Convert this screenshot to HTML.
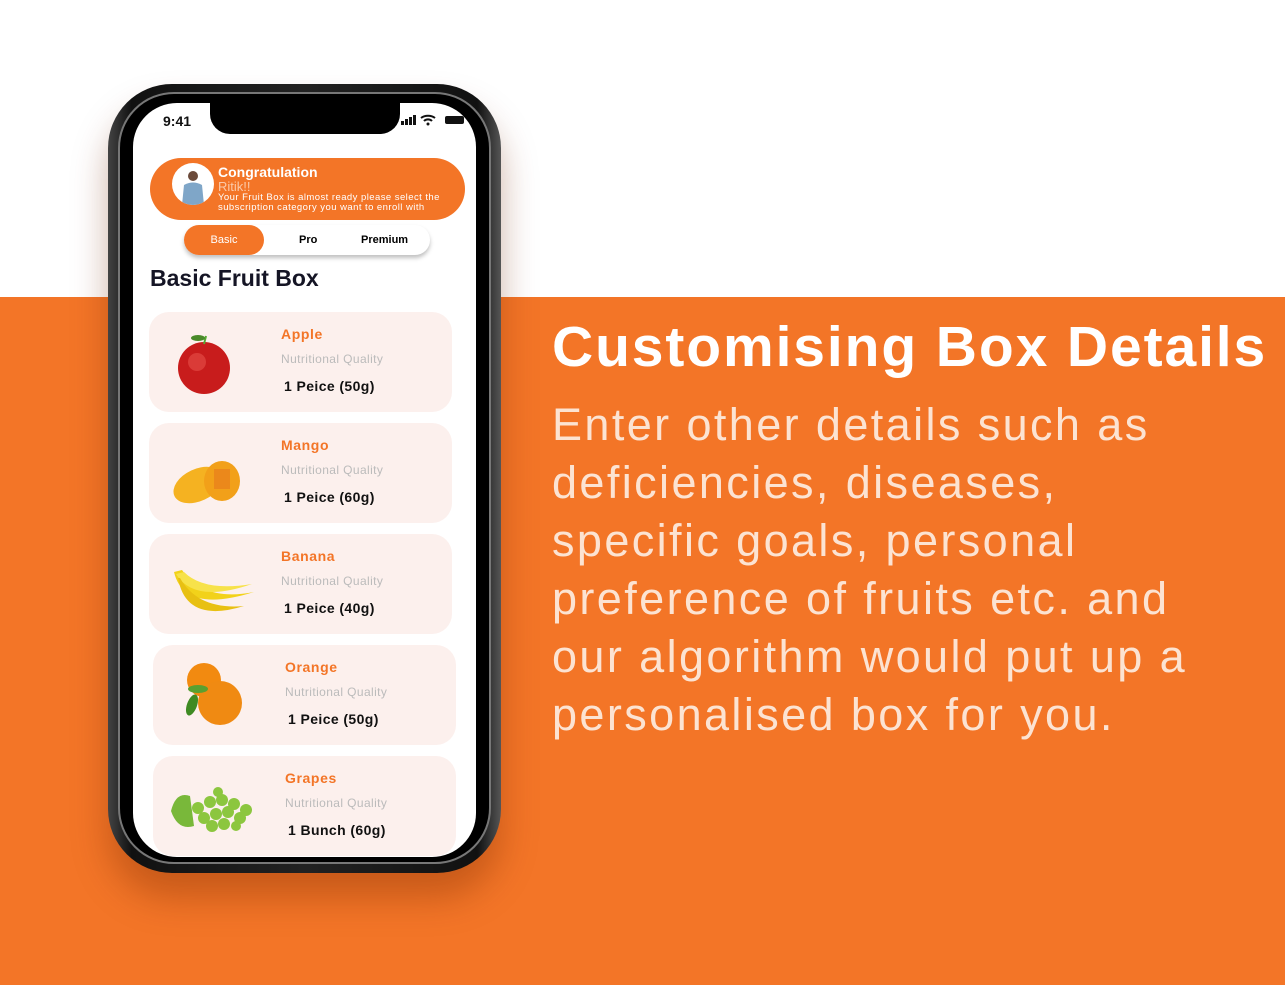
<!DOCTYPE html>
<html><head><meta charset="utf-8"><style>
*{margin:0;padding:0;box-sizing:border-box}
body{width:1285px;height:985px;position:relative;overflow:hidden;background:#fff;font-family:"Liberation Sans",sans-serif}
.band{position:absolute;left:0;top:297px;width:1285px;height:688px;background:#F37527}
.h1{position:absolute;left:552px;top:314px;color:#fff;font-size:57px;font-weight:bold;white-space:nowrap;letter-spacing:1.9px}
.p{position:absolute;left:552px;top:396px;color:#FCE3D2;font-size:45px;line-height:58px;width:700px;letter-spacing:2.4px}
.frame{position:absolute;left:108px;top:84px;width:393px;height:789px;border-radius:64px;background:linear-gradient(90deg,#444,#111 6%,#222 50%,#111 94%,#555);box-shadow:0 25px 35px rgba(120,40,0,.35)}
.frame2{position:absolute;left:118px;top:92px;width:373px;height:772px;border-radius:56px;background:#000;border:2px solid #777}
.screen{position:absolute;left:133px;top:103px;width:343px;height:754px;border-radius:44px;background:#fff;overflow:hidden}
.notch{position:absolute;left:77px;top:0;width:190px;height:31px;background:#000;border-radius:0 0 20px 20px}
.time{position:absolute;left:30px;top:10px;font-size:14px;font-weight:bold;color:#111}
.banner{position:absolute;left:17px;top:55px;width:315px;height:62px;border-radius:31px;background:#F37527;color:#fff}
.av{position:absolute;left:22px;top:5px;width:42px;height:42px;border-radius:50%;background:#fff;overflow:hidden}
.tabs{position:absolute;left:51px;top:122px;width:246px;height:30px;border-radius:15px;background:#fff;box-shadow:0 3px 4px rgba(0,0,0,.25);font-size:11px;font-weight:bold}
.card{position:absolute;width:303px;height:100px;border-radius:20px;background:#FCF0ED}
.card .n{position:absolute;left:132px;top:14px;color:#F37527;font-size:14px;font-weight:bold;letter-spacing:.6px}
.card .q{position:absolute;left:132px;top:40px;color:#bbb;font-size:12px;letter-spacing:.4px}
.card .w{position:absolute;left:135px;top:66px;color:#111;font-size:14px;font-weight:bold;letter-spacing:.4px}
.card svg{position:absolute;left:15px;top:10px}
</style></head><body>
<div class="band"></div>
<div class="h1">Customising Box Details</div>
<div class="p">Enter other details such as<br>deficiencies, diseases,<br>specific goals, personal<br>preference of fruits etc. and<br>our algorithm would put up a<br>personalised box for you.</div>
<div class="frame"></div><div class="frame2"></div>
<div class="screen">
 <div class="notch"></div>
 <div class="time">9:41</div>
 <svg style="position:absolute;left:268px;top:11px" width="64" height="12"><rect x="0" y="7" width="3" height="4" fill="#111"/><rect x="4" y="5" width="3" height="6" fill="#111"/><rect x="8" y="3" width="3" height="8" fill="#111"/><rect x="12" y="1" width="3" height="10" fill="#111"/><path d="M20 4a10 8 0 0 1 14 0M23 7a5 4 0 0 1 8 0" stroke="#111" stroke-width="2" fill="none"/><circle cx="27" cy="10" r="1.5" fill="#111"/><rect x="44" y="2" width="19" height="8" rx="2" fill="#111"/></svg>
 <div class="banner">
  <div class="av"><svg width="42" height="42"><circle cx="21" cy="13" r="5" fill="#6b4a3a"/><path d="M10 42 L12 22 Q21 17 30 22 L32 42Z" fill="#7fa6c8"/></svg></div>
  <div style="position:absolute;left:68px;top:6px;font-size:14px;font-weight:bold">Congratulation</div>
  <div style="position:absolute;left:68px;top:21px;font-size:13px;color:#FBC9A8">Ritik!!</div>
  <div style="position:absolute;left:68px;top:35px;font-size:9.5px;line-height:10px;width:250px;letter-spacing:.45px">Your Fruit Box is almost ready please select the subscription category you want to enroll with</div>
 </div>
 <div class="tabs">
  <div style="position:absolute;left:0;top:0;width:80px;height:30px;border-radius:15px;background:#F37527;color:#fff;text-align:center;line-height:30px;font-weight:normal">Basic</div>
  <div style="position:absolute;left:115px;top:9px">Pro</div>
  <div style="position:absolute;left:177px;top:9px">Premium</div>
 </div>
 <div style="position:absolute;left:17px;top:162px;font-size:23px;font-weight:bold;color:#151525">Basic Fruit Box</div>

 <div class="card" style="left:16px;top:209px"><svg width="90" height="80"><circle cx="40" cy="46" r="26" fill="#c81c1c"/><circle cx="33" cy="40" r="9" fill="#e6504a" opacity=".6"/><path d="M40 22 L42 14" stroke="#5a3" stroke-width="2"/><ellipse cx="34" cy="16" rx="7" ry="3" fill="#4a8a2a"/></svg><div class="n">Apple</div><div class="q">Nutritional Quality</div><div class="w">1 Peice (50g)</div></div>
 <div class="card" style="left:16px;top:320px"><svg width="90" height="80"><ellipse cx="34" cy="52" rx="26" ry="16" fill="#f5b221" transform="rotate(-25 34 52)"/><ellipse cx="58" cy="48" rx="18" ry="20" fill="#f2a019"/><rect x="50" y="36" width="16" height="20" fill="#e6781c" opacity=".6"/></svg><div class="n">Mango</div><div class="q">Nutritional Quality</div><div class="w">1 Peice (60g)</div></div>
 <div class="card" style="left:16px;top:431px"><svg width="100" height="80"><path d="M10 28 Q20 70 90 48 Q40 58 18 26Z" fill="#f2d21a"/><path d="M12 30 Q30 60 88 40 Q40 48 20 28Z" fill="#f7e24a"/><path d="M14 34 Q22 80 80 62 Q34 66 16 34Z" fill="#e8c012"/></svg><div class="n">Banana</div><div class="q">Nutritional Quality</div><div class="w">1 Peice (40g)</div></div>
 <div class="card" style="left:20px;top:542px"><svg width="90" height="80"><circle cx="36" cy="25" r="17" fill="#f28a10"/><circle cx="52" cy="48" r="22" fill="#f08a12"/><ellipse cx="24" cy="50" rx="5" ry="11" fill="#3f8a22" transform="rotate(20 24 50)"/><ellipse cx="30" cy="34" rx="10" ry="4" fill="#5aa030"/></svg><div class="n">Orange</div><div class="q">Nutritional Quality</div><div class="w">1 Peice (50g)</div></div>
 <div class="card" style="left:20px;top:653px"><svg width="100" height="80"><path d="M3 45 Q8 25 22 30 L26 60 Q10 65 3 45Z" fill="#79b83a"/><g fill="#8cc63f"><circle cx="30" cy="42" r="6"/><circle cx="42" cy="36" r="6"/><circle cx="54" cy="34" r="6"/><circle cx="66" cy="38" r="6"/><circle cx="78" cy="44" r="6"/><circle cx="36" cy="52" r="6"/><circle cx="48" cy="48" r="6"/><circle cx="60" cy="46" r="6"/><circle cx="72" cy="52" r="6"/><circle cx="44" cy="60" r="6"/><circle cx="56" cy="58" r="6"/><circle cx="68" cy="60" r="5"/><circle cx="50" cy="26" r="5"/></g></svg><div class="n">Grapes</div><div class="q">Nutritional Quality</div><div class="w">1 Bunch (60g)</div></div>
</div>
</body></html>
